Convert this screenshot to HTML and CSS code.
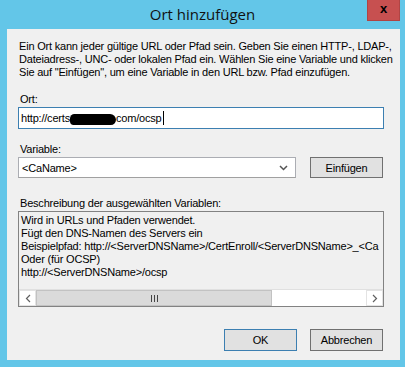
FILE: index.html
```html
<!DOCTYPE html>
<html lang="de">
<head>
  <meta charset="UTF-8">
  <title>Ort hinzufügen</title>
  <link rel="stylesheet" href="styles.css">
</head>
<body>
  <div class="window">
    <div class="titlebar">
      <span></span>
      <span class="title">Ort hinzufügen</span>
      <span class="close">x</span>
    </div>

    <div class="client">
      <p class="intro">Ein Ort kann jeder gültige URL oder Pfad sein. Geben Sie einen HTTP-, LDAP-,<br>Dateiadress-, UNC- oder lokalen Pfad ein. Wählen Sie eine Variable und klicken<br>Sie auf "Einfügen", um eine Variable in den URL bzw. Pfad einzufügen.</p>

      <label class="caption">Ort:</label>
      <div class="textbox">http://certs<span class="redact"></span>com/ocsp<span class="caret"></span></div>

      <label class="caption">Variable:</label>
      <div class="var-row">
        <div class="combo">
          <span>&lt;CaName&gt;</span>
          <svg width="9" height="6" viewBox="0 0 9 6"><path d="M1 1 L4.5 4.5 L8 1" fill="none" stroke="#555" stroke-width="1.5"/></svg>
        </div>
        <span class="btn">Einfügen</span>
      </div>

      <label class="caption">Beschreibung der ausgewählten Variablen:</label>
      <div class="desc">
        <div class="desc-text">Wird in URLs und Pfaden verwendet.<br>Fügt den DNS-Namen des Servers ein<br>Beispielpfad: http://&lt;ServerDNSName&gt;/CertEnroll/&lt;ServerDNSName&gt;_&lt;Ca<br>Oder (für OCSP)<br>http://&lt;ServerDNSName&gt;/ocsp</div>
        <div class="hscroll">
          <span class="arrow">
            <svg width="6" height="9" viewBox="0 0 6 9"><path d="M5 1 L1.5 4.5 L5 8" fill="none" stroke="#606060" stroke-width="1.2"/></svg>
          </span>
          <span class="thumb">
            <svg width="7" height="7" viewBox="0 0 7 7"><path d="M0.5 0 V7 M3.5 0 V7 M6.5 0 V7" stroke="#444" stroke-width="1"/></svg>
          </span>
          <span class="track"></span>
          <span class="arrow">
            <svg width="6" height="9" viewBox="0 0 6 9"><path d="M1 1 L4.5 4.5 L1 8" fill="none" stroke="#606060" stroke-width="1.2"/></svg>
          </span>
        </div>
      </div>

      <div class="actions">
        <span class="btn default">OK</span>
        <span class="btn">Abbrechen</span>
      </div>
    </div>
  </div>
</body>
</html>
```

FILE: styles.css
```css
body {
  margin: 0;
  background: #63c6e8;
  font-family: "Liberation Sans", Arial, sans-serif;
  font-size: 11px;
  letter-spacing: -0.2px;
  color: #000;
}

.window {
  width: 405px;
  height: 367px;
}

.titlebar {
  height: 29px;
  display: grid;
  grid-template-columns: 1fr auto 1fr;
  align-items: start;
}

.title {
  font-family: "Open Sans", "Noto Sans", sans-serif;
  font-size: 15px;
  letter-spacing: 0;
  color: #111;
  padding-top: 4px;
  line-height: 20px;
}

.close {
  justify-self: end;
  width: 31px;
  height: 20px;
  margin-right: 5px;
  background: #c75050;
  border: 1px solid #b04444;
  border-top: none;
  color: #000;
  font-weight: bold;
  font-size: 13px;
  line-height: 17px;
  text-align: center;
}

.client {
  margin: 0 5px 0 7px;
  height: 331px;
  background: #f0f0f0;
  padding: 11px 16px 0 11px;
  box-sizing: border-box;
  display: flex;
  flex-direction: column;
}

.intro {
  margin: 0 0 0 1px;
  line-height: 13px;
  white-space: nowrap;
}

.caption {
  display: block;
  margin: 14px 0 0 2px;
  line-height: 13px;
}

.textbox {
  margin-top: 1px;
  height: 22px;
  box-sizing: border-box;
  border: 1px solid #3c7fb1;
  background: #fff;
  padding-left: 2px;
  display: flex;
  align-items: center;
}

.redact {
  display: inline-block;
  width: 46px;
  height: 11px;
  background: #000;
  border-radius: 6px 8px 7px 5px;
  margin-top: 3px;
}

.caret {
  display: inline-block;
  width: 1px;
  height: 14px;
  background: #000;
  margin-left: 2px;
}

.var-row {
  margin-top: 1px;
  display: flex;
  gap: 14px;
  align-items: center;
}

.combo {
  width: 278px;
  height: 21px;
  box-sizing: border-box;
  border: 1px solid #abadb3;
  border-bottom-color: #a0a0a0;
  background: #fff;
  display: flex;
  justify-content: space-between;
  align-items: center;
  padding: 0 7px 0 3px;
}

.btn {
  width: 73px;
  height: 21px;
  box-sizing: border-box;
  border: 1px solid #707070;
  background: #e1e1e1;
  display: flex;
  justify-content: center;
  align-items: center;
}

.btn.default {
  border-color: #3c7fb1;
}

.var-row + .caption {
  margin-top: 19px;
}

.desc {
  margin-top: 1px;
  height: 96px;
  box-sizing: border-box;
  border: 1px solid #828282;
  background: #f0f0f0;
  display: flex;
  flex-direction: column;
}

.desc-text {
  flex: 1;
  overflow: hidden;
  white-space: nowrap;
  line-height: 13px;
  padding: 2px 0 0 2px;
}

.hscroll {
  height: 17px;
  display: flex;
  background: #fff;
  border-top: 1px solid #e0e0e0;
  box-sizing: border-box;
}

.arrow {
  width: 17px;
  display: flex;
  justify-content: center;
  align-items: center;
  background: #fff;
  border: 1px solid #e3e3e3;
  box-sizing: border-box;
}

.thumb {
  width: 236px;
  background: #dadada;
  border: 1px solid #c2c2c2;
  box-sizing: border-box;
  display: flex;
  justify-content: center;
  align-items: center;
}

.track {
  flex: 1;
}

.actions {
  margin-top: 22px;
  display: flex;
  justify-content: flex-end;
  gap: 13px;
  padding-right: 1px;
}

.actions .btn {
  height: 22px;
}
```
